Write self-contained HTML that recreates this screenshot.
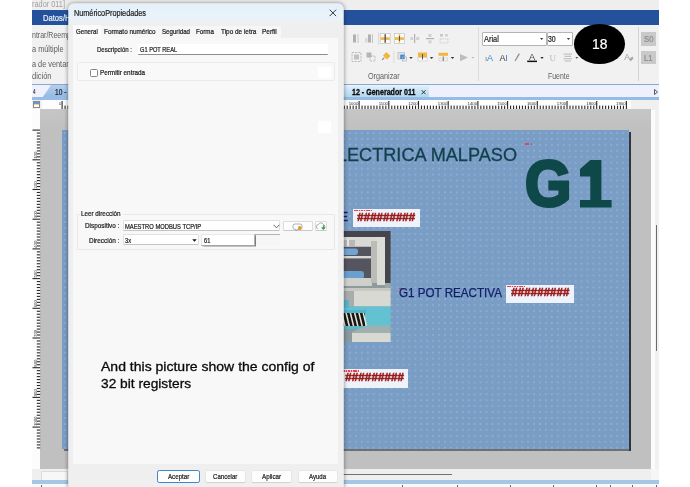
<!DOCTYPE html>
<html>
<head>
<meta charset="utf-8">
<title>NuméricoPropiedades</title>
<style>
html,body{margin:0;padding:0;}
body{width:690px;height:487px;background:#fff;position:relative;overflow:hidden;font-family:"Liberation Sans",sans-serif;}
.a{position:absolute;}
.t{position:absolute;white-space:nowrap;line-height:1;transform-origin:0 0;-webkit-text-stroke:0.22px currentColor;}
#shot{position:absolute;left:32px;top:0;width:626.5px;height:487px;background:#f0f0f0;overflow:hidden;}
#shot>*{filter:blur(0.3px);}
</style>
</head>
<body>
<div id="shot">
<div class="a" style="left:0.00px;top:0.00px;width:626.50px;height:10.00px;background:#eeeeee;"></div>
<div class="a" style="left:0.00px;top:10.00px;width:626.50px;height:14.50px;background:#24519b;"></div>
<div class="a" style="left:0.00px;top:24.50px;width:626.50px;height:60.00px;background:#f1f1f1;"></div>
<div class="a" style="left:446.00px;top:27.00px;width:1.00px;height:54.00px;background:#dcdcdc;"></div>
<div class="a" style="left:605.50px;top:27.00px;width:1.00px;height:54.00px;background:#d4d4d4;"></div>
<div class="a" style="left:0.00px;top:84.00px;width:626.50px;height:1.00px;background:#8aa6d2;"></div>
<div class="a" style="left:0.00px;top:85.00px;width:626.50px;height:13.50px;background:#eef1fb;"></div>
<svg class="a" style="left:0;top:85px" width="40" height="14" viewBox="0 0 40 14"><defs><linearGradient id="tg" x1="0" y1="0" x2="0" y2="1"><stop offset="0" stop-color="#b4cfec"/><stop offset="1" stop-color="#8fb7e0"/></linearGradient></defs><polygon points="19,0 40,0 40,14 9.5,14" fill="url(#tg)"/></svg>
<div class="a" style="left:311.00px;top:86.00px;width:85.70px;height:13.00px;background:linear-gradient(#dff0fa,#a9d2ee);"></div>
<div class="a" style="left:0.00px;top:97.40px;width:626.50px;height:2.50px;background:#96bbe4;"></div>
<div class="a" style="left:0.00px;top:100.00px;width:626.50px;height:9.00px;background:#f0f0f0;"></div>
<div class="a" style="left:10.00px;top:100.00px;width:588.50px;height:9.00px;background:#fdfdfd;"></div>
<div class="a" style="left:0.50px;top:101.00px;width:7.50px;height:7.00px;background:#fff;border:1px solid #8a8a8a;box-sizing:border-box;"></div>
<div class="a" style="left:1.50px;top:102.00px;width:5.50px;height:1.60px;background:#5b9be0;"></div>
<div class="a" style="left:1.50px;top:103.60px;width:5.50px;height:1.00px;background:#f3d37a;"></div>
<div class="a" style="left:0.00px;top:109.00px;width:619.00px;height:360.00px;background:linear-gradient(#c6c6c6,#c0c0c0 20px);"></div>
<div class="a" style="left:0.00px;top:109.00px;width:8.00px;height:372.00px;background:#fcfcfc;"></div>
<svg class="a" style="left:0;top:0" width="626" height="487" viewBox="32 0 626 487"><rect x="61.55" y="101" width="1.1" height="8" fill="#2a2a2a"/><text x="61.30" y="105" text-anchor="end" font-family="Liberation Sans" font-size="4.3" fill="#333">0</text><rect x="64.52" y="105.6" width="1.1" height="3.4" fill="#2a2a2a"/><rect x="67.49" y="105.6" width="1.1" height="3.4" fill="#2a2a2a"/><rect x="70.46" y="105.6" width="1.1" height="3.4" fill="#2a2a2a"/><rect x="73.43" y="105.6" width="1.1" height="3.4" fill="#2a2a2a"/><rect x="76.40" y="105.6" width="1.1" height="3.4" fill="#2a2a2a"/><rect x="79.37" y="105.6" width="1.1" height="3.4" fill="#2a2a2a"/><rect x="82.34" y="105.6" width="1.1" height="3.4" fill="#2a2a2a"/><rect x="85.31" y="105.6" width="1.1" height="3.4" fill="#2a2a2a"/><rect x="88.28" y="105.6" width="1.1" height="3.4" fill="#2a2a2a"/><rect x="91.25" y="101" width="1.1" height="8" fill="#2a2a2a"/><text x="91.00" y="105" text-anchor="end" font-family="Liberation Sans" font-size="4.3" fill="#333">100</text><rect x="94.22" y="105.6" width="1.1" height="3.4" fill="#2a2a2a"/><rect x="97.19" y="105.6" width="1.1" height="3.4" fill="#2a2a2a"/><rect x="100.16" y="105.6" width="1.1" height="3.4" fill="#2a2a2a"/><rect x="103.13" y="105.6" width="1.1" height="3.4" fill="#2a2a2a"/><rect x="106.10" y="105.6" width="1.1" height="3.4" fill="#2a2a2a"/><rect x="109.07" y="105.6" width="1.1" height="3.4" fill="#2a2a2a"/><rect x="112.04" y="105.6" width="1.1" height="3.4" fill="#2a2a2a"/><rect x="115.01" y="105.6" width="1.1" height="3.4" fill="#2a2a2a"/><rect x="117.98" y="105.6" width="1.1" height="3.4" fill="#2a2a2a"/><rect x="120.95" y="101" width="1.1" height="8" fill="#2a2a2a"/><text x="120.70" y="105" text-anchor="end" font-family="Liberation Sans" font-size="4.3" fill="#333">200</text><rect x="123.92" y="105.6" width="1.1" height="3.4" fill="#2a2a2a"/><rect x="126.89" y="105.6" width="1.1" height="3.4" fill="#2a2a2a"/><rect x="129.86" y="105.6" width="1.1" height="3.4" fill="#2a2a2a"/><rect x="132.83" y="105.6" width="1.1" height="3.4" fill="#2a2a2a"/><rect x="135.80" y="105.6" width="1.1" height="3.4" fill="#2a2a2a"/><rect x="138.77" y="105.6" width="1.1" height="3.4" fill="#2a2a2a"/><rect x="141.74" y="105.6" width="1.1" height="3.4" fill="#2a2a2a"/><rect x="144.71" y="105.6" width="1.1" height="3.4" fill="#2a2a2a"/><rect x="147.68" y="105.6" width="1.1" height="3.4" fill="#2a2a2a"/><rect x="150.65" y="101" width="1.1" height="8" fill="#2a2a2a"/><text x="150.40" y="105" text-anchor="end" font-family="Liberation Sans" font-size="4.3" fill="#333">300</text><rect x="153.62" y="105.6" width="1.1" height="3.4" fill="#2a2a2a"/><rect x="156.59" y="105.6" width="1.1" height="3.4" fill="#2a2a2a"/><rect x="159.56" y="105.6" width="1.1" height="3.4" fill="#2a2a2a"/><rect x="162.53" y="105.6" width="1.1" height="3.4" fill="#2a2a2a"/><rect x="165.50" y="105.6" width="1.1" height="3.4" fill="#2a2a2a"/><rect x="168.47" y="105.6" width="1.1" height="3.4" fill="#2a2a2a"/><rect x="171.44" y="105.6" width="1.1" height="3.4" fill="#2a2a2a"/><rect x="174.41" y="105.6" width="1.1" height="3.4" fill="#2a2a2a"/><rect x="177.38" y="105.6" width="1.1" height="3.4" fill="#2a2a2a"/><rect x="180.35" y="101" width="1.1" height="8" fill="#2a2a2a"/><text x="180.10" y="105" text-anchor="end" font-family="Liberation Sans" font-size="4.3" fill="#333">400</text><rect x="183.32" y="105.6" width="1.1" height="3.4" fill="#2a2a2a"/><rect x="186.29" y="105.6" width="1.1" height="3.4" fill="#2a2a2a"/><rect x="189.26" y="105.6" width="1.1" height="3.4" fill="#2a2a2a"/><rect x="192.23" y="105.6" width="1.1" height="3.4" fill="#2a2a2a"/><rect x="195.20" y="105.6" width="1.1" height="3.4" fill="#2a2a2a"/><rect x="198.17" y="105.6" width="1.1" height="3.4" fill="#2a2a2a"/><rect x="201.14" y="105.6" width="1.1" height="3.4" fill="#2a2a2a"/><rect x="204.11" y="105.6" width="1.1" height="3.4" fill="#2a2a2a"/><rect x="207.08" y="105.6" width="1.1" height="3.4" fill="#2a2a2a"/><rect x="210.05" y="101" width="1.1" height="8" fill="#2a2a2a"/><text x="209.80" y="105" text-anchor="end" font-family="Liberation Sans" font-size="4.3" fill="#333">500</text><rect x="213.02" y="105.6" width="1.1" height="3.4" fill="#2a2a2a"/><rect x="215.99" y="105.6" width="1.1" height="3.4" fill="#2a2a2a"/><rect x="218.96" y="105.6" width="1.1" height="3.4" fill="#2a2a2a"/><rect x="221.93" y="105.6" width="1.1" height="3.4" fill="#2a2a2a"/><rect x="224.90" y="105.6" width="1.1" height="3.4" fill="#2a2a2a"/><rect x="227.87" y="105.6" width="1.1" height="3.4" fill="#2a2a2a"/><rect x="230.84" y="105.6" width="1.1" height="3.4" fill="#2a2a2a"/><rect x="233.81" y="105.6" width="1.1" height="3.4" fill="#2a2a2a"/><rect x="236.78" y="105.6" width="1.1" height="3.4" fill="#2a2a2a"/><rect x="239.75" y="101" width="1.1" height="8" fill="#2a2a2a"/><text x="239.50" y="105" text-anchor="end" font-family="Liberation Sans" font-size="4.3" fill="#333">600</text><rect x="242.72" y="105.6" width="1.1" height="3.4" fill="#2a2a2a"/><rect x="245.69" y="105.6" width="1.1" height="3.4" fill="#2a2a2a"/><rect x="248.66" y="105.6" width="1.1" height="3.4" fill="#2a2a2a"/><rect x="251.63" y="105.6" width="1.1" height="3.4" fill="#2a2a2a"/><rect x="254.60" y="105.6" width="1.1" height="3.4" fill="#2a2a2a"/><rect x="257.57" y="105.6" width="1.1" height="3.4" fill="#2a2a2a"/><rect x="260.54" y="105.6" width="1.1" height="3.4" fill="#2a2a2a"/><rect x="263.51" y="105.6" width="1.1" height="3.4" fill="#2a2a2a"/><rect x="266.48" y="105.6" width="1.1" height="3.4" fill="#2a2a2a"/><rect x="269.45" y="101" width="1.1" height="8" fill="#2a2a2a"/><text x="269.20" y="105" text-anchor="end" font-family="Liberation Sans" font-size="4.3" fill="#333">700</text><rect x="272.42" y="105.6" width="1.1" height="3.4" fill="#2a2a2a"/><rect x="275.39" y="105.6" width="1.1" height="3.4" fill="#2a2a2a"/><rect x="278.36" y="105.6" width="1.1" height="3.4" fill="#2a2a2a"/><rect x="281.33" y="105.6" width="1.1" height="3.4" fill="#2a2a2a"/><rect x="284.30" y="105.6" width="1.1" height="3.4" fill="#2a2a2a"/><rect x="287.27" y="105.6" width="1.1" height="3.4" fill="#2a2a2a"/><rect x="290.24" y="105.6" width="1.1" height="3.4" fill="#2a2a2a"/><rect x="293.21" y="105.6" width="1.1" height="3.4" fill="#2a2a2a"/><rect x="296.18" y="105.6" width="1.1" height="3.4" fill="#2a2a2a"/><rect x="299.15" y="101" width="1.1" height="8" fill="#2a2a2a"/><text x="298.90" y="105" text-anchor="end" font-family="Liberation Sans" font-size="4.3" fill="#333">800</text><rect x="302.12" y="105.6" width="1.1" height="3.4" fill="#2a2a2a"/><rect x="305.09" y="105.6" width="1.1" height="3.4" fill="#2a2a2a"/><rect x="308.06" y="105.6" width="1.1" height="3.4" fill="#2a2a2a"/><rect x="311.03" y="105.6" width="1.1" height="3.4" fill="#2a2a2a"/><rect x="314.00" y="105.6" width="1.1" height="3.4" fill="#2a2a2a"/><rect x="316.97" y="105.6" width="1.1" height="3.4" fill="#2a2a2a"/><rect x="319.94" y="105.6" width="1.1" height="3.4" fill="#2a2a2a"/><rect x="322.91" y="105.6" width="1.1" height="3.4" fill="#2a2a2a"/><rect x="325.88" y="105.6" width="1.1" height="3.4" fill="#2a2a2a"/><rect x="328.85" y="101" width="1.1" height="8" fill="#2a2a2a"/><text x="328.60" y="105" text-anchor="end" font-family="Liberation Sans" font-size="4.3" fill="#333">900</text><rect x="331.82" y="105.6" width="1.1" height="3.4" fill="#2a2a2a"/><rect x="334.79" y="105.6" width="1.1" height="3.4" fill="#2a2a2a"/><rect x="337.76" y="105.6" width="1.1" height="3.4" fill="#2a2a2a"/><rect x="340.73" y="105.6" width="1.1" height="3.4" fill="#2a2a2a"/><rect x="343.70" y="105.6" width="1.1" height="3.4" fill="#2a2a2a"/><rect x="346.67" y="105.6" width="1.1" height="3.4" fill="#2a2a2a"/><rect x="349.64" y="105.6" width="1.1" height="3.4" fill="#2a2a2a"/><rect x="352.61" y="105.6" width="1.1" height="3.4" fill="#2a2a2a"/><rect x="355.58" y="105.6" width="1.1" height="3.4" fill="#2a2a2a"/><rect x="358.55" y="101" width="1.1" height="8" fill="#2a2a2a"/><text x="358.30" y="105" text-anchor="end" font-family="Liberation Sans" font-size="4.3" fill="#333">1000</text><rect x="361.52" y="105.6" width="1.1" height="3.4" fill="#2a2a2a"/><rect x="364.49" y="105.6" width="1.1" height="3.4" fill="#2a2a2a"/><rect x="367.46" y="105.6" width="1.1" height="3.4" fill="#2a2a2a"/><rect x="370.43" y="105.6" width="1.1" height="3.4" fill="#2a2a2a"/><rect x="373.40" y="105.6" width="1.1" height="3.4" fill="#2a2a2a"/><rect x="376.37" y="105.6" width="1.1" height="3.4" fill="#2a2a2a"/><rect x="379.34" y="105.6" width="1.1" height="3.4" fill="#2a2a2a"/><rect x="382.31" y="105.6" width="1.1" height="3.4" fill="#2a2a2a"/><rect x="385.28" y="105.6" width="1.1" height="3.4" fill="#2a2a2a"/><rect x="388.25" y="101" width="1.1" height="8" fill="#2a2a2a"/><text x="388.00" y="105" text-anchor="end" font-family="Liberation Sans" font-size="4.3" fill="#333">1100</text><rect x="391.22" y="105.6" width="1.1" height="3.4" fill="#2a2a2a"/><rect x="394.19" y="105.6" width="1.1" height="3.4" fill="#2a2a2a"/><rect x="397.16" y="105.6" width="1.1" height="3.4" fill="#2a2a2a"/><rect x="400.13" y="105.6" width="1.1" height="3.4" fill="#2a2a2a"/><rect x="403.10" y="105.6" width="1.1" height="3.4" fill="#2a2a2a"/><rect x="406.07" y="105.6" width="1.1" height="3.4" fill="#2a2a2a"/><rect x="409.04" y="105.6" width="1.1" height="3.4" fill="#2a2a2a"/><rect x="412.01" y="105.6" width="1.1" height="3.4" fill="#2a2a2a"/><rect x="414.98" y="105.6" width="1.1" height="3.4" fill="#2a2a2a"/><rect x="417.95" y="101" width="1.1" height="8" fill="#2a2a2a"/><text x="417.70" y="105" text-anchor="end" font-family="Liberation Sans" font-size="4.3" fill="#333">1200</text><rect x="420.92" y="105.6" width="1.1" height="3.4" fill="#2a2a2a"/><rect x="423.89" y="105.6" width="1.1" height="3.4" fill="#2a2a2a"/><rect x="426.86" y="105.6" width="1.1" height="3.4" fill="#2a2a2a"/><rect x="429.83" y="105.6" width="1.1" height="3.4" fill="#2a2a2a"/><rect x="432.80" y="105.6" width="1.1" height="3.4" fill="#2a2a2a"/><rect x="435.77" y="105.6" width="1.1" height="3.4" fill="#2a2a2a"/><rect x="438.74" y="105.6" width="1.1" height="3.4" fill="#2a2a2a"/><rect x="441.71" y="105.6" width="1.1" height="3.4" fill="#2a2a2a"/><rect x="444.68" y="105.6" width="1.1" height="3.4" fill="#2a2a2a"/><rect x="447.65" y="101" width="1.1" height="8" fill="#2a2a2a"/><text x="447.40" y="105" text-anchor="end" font-family="Liberation Sans" font-size="4.3" fill="#333">1300</text><rect x="450.62" y="105.6" width="1.1" height="3.4" fill="#2a2a2a"/><rect x="453.59" y="105.6" width="1.1" height="3.4" fill="#2a2a2a"/><rect x="456.56" y="105.6" width="1.1" height="3.4" fill="#2a2a2a"/><rect x="459.53" y="105.6" width="1.1" height="3.4" fill="#2a2a2a"/><rect x="462.50" y="105.6" width="1.1" height="3.4" fill="#2a2a2a"/><rect x="465.47" y="105.6" width="1.1" height="3.4" fill="#2a2a2a"/><rect x="468.44" y="105.6" width="1.1" height="3.4" fill="#2a2a2a"/><rect x="471.41" y="105.6" width="1.1" height="3.4" fill="#2a2a2a"/><rect x="474.38" y="105.6" width="1.1" height="3.4" fill="#2a2a2a"/><rect x="477.35" y="101" width="1.1" height="8" fill="#2a2a2a"/><text x="477.10" y="105" text-anchor="end" font-family="Liberation Sans" font-size="4.3" fill="#333">1400</text><rect x="480.32" y="105.6" width="1.1" height="3.4" fill="#2a2a2a"/><rect x="483.29" y="105.6" width="1.1" height="3.4" fill="#2a2a2a"/><rect x="486.26" y="105.6" width="1.1" height="3.4" fill="#2a2a2a"/><rect x="489.23" y="105.6" width="1.1" height="3.4" fill="#2a2a2a"/><rect x="492.20" y="105.6" width="1.1" height="3.4" fill="#2a2a2a"/><rect x="495.17" y="105.6" width="1.1" height="3.4" fill="#2a2a2a"/><rect x="498.14" y="105.6" width="1.1" height="3.4" fill="#2a2a2a"/><rect x="501.11" y="105.6" width="1.1" height="3.4" fill="#2a2a2a"/><rect x="504.08" y="105.6" width="1.1" height="3.4" fill="#2a2a2a"/><rect x="507.05" y="101" width="1.1" height="8" fill="#2a2a2a"/><text x="506.80" y="105" text-anchor="end" font-family="Liberation Sans" font-size="4.3" fill="#333">1500</text><rect x="510.02" y="105.6" width="1.1" height="3.4" fill="#2a2a2a"/><rect x="512.99" y="105.6" width="1.1" height="3.4" fill="#2a2a2a"/><rect x="515.96" y="105.6" width="1.1" height="3.4" fill="#2a2a2a"/><rect x="518.93" y="105.6" width="1.1" height="3.4" fill="#2a2a2a"/><rect x="521.90" y="105.6" width="1.1" height="3.4" fill="#2a2a2a"/><rect x="524.87" y="105.6" width="1.1" height="3.4" fill="#2a2a2a"/><rect x="527.84" y="105.6" width="1.1" height="3.4" fill="#2a2a2a"/><rect x="530.81" y="105.6" width="1.1" height="3.4" fill="#2a2a2a"/><rect x="533.78" y="105.6" width="1.1" height="3.4" fill="#2a2a2a"/><rect x="536.75" y="101" width="1.1" height="8" fill="#2a2a2a"/><text x="536.50" y="105" text-anchor="end" font-family="Liberation Sans" font-size="4.3" fill="#333">1600</text><rect x="539.72" y="105.6" width="1.1" height="3.4" fill="#2a2a2a"/><rect x="542.69" y="105.6" width="1.1" height="3.4" fill="#2a2a2a"/><rect x="545.66" y="105.6" width="1.1" height="3.4" fill="#2a2a2a"/><rect x="548.63" y="105.6" width="1.1" height="3.4" fill="#2a2a2a"/><rect x="551.60" y="105.6" width="1.1" height="3.4" fill="#2a2a2a"/><rect x="554.57" y="105.6" width="1.1" height="3.4" fill="#2a2a2a"/><rect x="557.54" y="105.6" width="1.1" height="3.4" fill="#2a2a2a"/><rect x="560.51" y="105.6" width="1.1" height="3.4" fill="#2a2a2a"/><rect x="563.48" y="105.6" width="1.1" height="3.4" fill="#2a2a2a"/><rect x="566.45" y="101" width="1.1" height="8" fill="#2a2a2a"/><text x="566.20" y="105" text-anchor="end" font-family="Liberation Sans" font-size="4.3" fill="#333">1700</text><rect x="569.42" y="105.6" width="1.1" height="3.4" fill="#2a2a2a"/><rect x="572.39" y="105.6" width="1.1" height="3.4" fill="#2a2a2a"/><rect x="575.36" y="105.6" width="1.1" height="3.4" fill="#2a2a2a"/><rect x="578.33" y="105.6" width="1.1" height="3.4" fill="#2a2a2a"/><rect x="581.30" y="105.6" width="1.1" height="3.4" fill="#2a2a2a"/><rect x="584.27" y="105.6" width="1.1" height="3.4" fill="#2a2a2a"/><rect x="587.24" y="105.6" width="1.1" height="3.4" fill="#2a2a2a"/><rect x="590.21" y="105.6" width="1.1" height="3.4" fill="#2a2a2a"/><rect x="593.18" y="105.6" width="1.1" height="3.4" fill="#2a2a2a"/><rect x="596.15" y="101" width="1.1" height="8" fill="#2a2a2a"/><text x="595.90" y="105" text-anchor="end" font-family="Liberation Sans" font-size="4.3" fill="#333">1800</text><rect x="599.12" y="105.6" width="1.1" height="3.4" fill="#2a2a2a"/><rect x="602.09" y="105.6" width="1.1" height="3.4" fill="#2a2a2a"/><rect x="605.06" y="105.6" width="1.1" height="3.4" fill="#2a2a2a"/><rect x="608.03" y="105.6" width="1.1" height="3.4" fill="#2a2a2a"/><rect x="611.00" y="105.6" width="1.1" height="3.4" fill="#2a2a2a"/><rect x="613.97" y="105.6" width="1.1" height="3.4" fill="#2a2a2a"/><rect x="616.94" y="105.6" width="1.1" height="3.4" fill="#2a2a2a"/><rect x="619.91" y="105.6" width="1.1" height="3.4" fill="#2a2a2a"/><rect x="622.88" y="105.6" width="1.1" height="3.4" fill="#2a2a2a"/><rect x="625.85" y="101" width="1.1" height="8" fill="#2a2a2a"/><text x="625.60" y="105" text-anchor="end" font-family="Liberation Sans" font-size="4.3" fill="#333">1900</text><rect x="32.5" y="129.55" width="7.5" height="1.1" fill="#2a2a2a"/><rect x="36.8" y="132.52" width="3.4" height="1.1" fill="#2a2a2a"/><rect x="36.8" y="135.49" width="3.4" height="1.1" fill="#2a2a2a"/><rect x="36.8" y="138.46" width="3.4" height="1.1" fill="#2a2a2a"/><rect x="36.8" y="141.43" width="3.4" height="1.1" fill="#2a2a2a"/><rect x="36.8" y="144.40" width="3.4" height="1.1" fill="#2a2a2a"/><rect x="36.8" y="147.37" width="3.4" height="1.1" fill="#2a2a2a"/><rect x="36.8" y="150.34" width="3.4" height="1.1" fill="#2a2a2a"/><rect x="36.8" y="153.31" width="3.4" height="1.1" fill="#2a2a2a"/><rect x="36.8" y="156.28" width="3.4" height="1.1" fill="#2a2a2a"/><rect x="32.5" y="159.25" width="7.5" height="1.1" fill="#2a2a2a"/><text transform="translate(36.6 158.80) rotate(-90)" text-anchor="start" font-family="Liberation Sans" font-size="4.3" fill="#333">100</text><rect x="36.8" y="162.22" width="3.4" height="1.1" fill="#2a2a2a"/><rect x="36.8" y="165.19" width="3.4" height="1.1" fill="#2a2a2a"/><rect x="36.8" y="168.16" width="3.4" height="1.1" fill="#2a2a2a"/><rect x="36.8" y="171.13" width="3.4" height="1.1" fill="#2a2a2a"/><rect x="36.8" y="174.10" width="3.4" height="1.1" fill="#2a2a2a"/><rect x="36.8" y="177.07" width="3.4" height="1.1" fill="#2a2a2a"/><rect x="36.8" y="180.04" width="3.4" height="1.1" fill="#2a2a2a"/><rect x="36.8" y="183.01" width="3.4" height="1.1" fill="#2a2a2a"/><rect x="36.8" y="185.98" width="3.4" height="1.1" fill="#2a2a2a"/><rect x="32.5" y="188.95" width="7.5" height="1.1" fill="#2a2a2a"/><text transform="translate(36.6 188.50) rotate(-90)" text-anchor="start" font-family="Liberation Sans" font-size="4.3" fill="#333">200</text><rect x="36.8" y="191.92" width="3.4" height="1.1" fill="#2a2a2a"/><rect x="36.8" y="194.89" width="3.4" height="1.1" fill="#2a2a2a"/><rect x="36.8" y="197.86" width="3.4" height="1.1" fill="#2a2a2a"/><rect x="36.8" y="200.83" width="3.4" height="1.1" fill="#2a2a2a"/><rect x="36.8" y="203.80" width="3.4" height="1.1" fill="#2a2a2a"/><rect x="36.8" y="206.77" width="3.4" height="1.1" fill="#2a2a2a"/><rect x="36.8" y="209.74" width="3.4" height="1.1" fill="#2a2a2a"/><rect x="36.8" y="212.71" width="3.4" height="1.1" fill="#2a2a2a"/><rect x="36.8" y="215.68" width="3.4" height="1.1" fill="#2a2a2a"/><rect x="32.5" y="218.65" width="7.5" height="1.1" fill="#2a2a2a"/><text transform="translate(36.6 218.20) rotate(-90)" text-anchor="start" font-family="Liberation Sans" font-size="4.3" fill="#333">300</text><rect x="36.8" y="221.62" width="3.4" height="1.1" fill="#2a2a2a"/><rect x="36.8" y="224.59" width="3.4" height="1.1" fill="#2a2a2a"/><rect x="36.8" y="227.56" width="3.4" height="1.1" fill="#2a2a2a"/><rect x="36.8" y="230.53" width="3.4" height="1.1" fill="#2a2a2a"/><rect x="36.8" y="233.50" width="3.4" height="1.1" fill="#2a2a2a"/><rect x="36.8" y="236.47" width="3.4" height="1.1" fill="#2a2a2a"/><rect x="36.8" y="239.44" width="3.4" height="1.1" fill="#2a2a2a"/><rect x="36.8" y="242.41" width="3.4" height="1.1" fill="#2a2a2a"/><rect x="36.8" y="245.38" width="3.4" height="1.1" fill="#2a2a2a"/><rect x="32.5" y="248.35" width="7.5" height="1.1" fill="#2a2a2a"/><text transform="translate(36.6 247.90) rotate(-90)" text-anchor="start" font-family="Liberation Sans" font-size="4.3" fill="#333">400</text><rect x="36.8" y="251.32" width="3.4" height="1.1" fill="#2a2a2a"/><rect x="36.8" y="254.29" width="3.4" height="1.1" fill="#2a2a2a"/><rect x="36.8" y="257.26" width="3.4" height="1.1" fill="#2a2a2a"/><rect x="36.8" y="260.23" width="3.4" height="1.1" fill="#2a2a2a"/><rect x="36.8" y="263.20" width="3.4" height="1.1" fill="#2a2a2a"/><rect x="36.8" y="266.17" width="3.4" height="1.1" fill="#2a2a2a"/><rect x="36.8" y="269.14" width="3.4" height="1.1" fill="#2a2a2a"/><rect x="36.8" y="272.11" width="3.4" height="1.1" fill="#2a2a2a"/><rect x="36.8" y="275.08" width="3.4" height="1.1" fill="#2a2a2a"/><rect x="32.5" y="278.05" width="7.5" height="1.1" fill="#2a2a2a"/><text transform="translate(36.6 277.60) rotate(-90)" text-anchor="start" font-family="Liberation Sans" font-size="4.3" fill="#333">500</text><rect x="36.8" y="281.02" width="3.4" height="1.1" fill="#2a2a2a"/><rect x="36.8" y="283.99" width="3.4" height="1.1" fill="#2a2a2a"/><rect x="36.8" y="286.96" width="3.4" height="1.1" fill="#2a2a2a"/><rect x="36.8" y="289.93" width="3.4" height="1.1" fill="#2a2a2a"/><rect x="36.8" y="292.90" width="3.4" height="1.1" fill="#2a2a2a"/><rect x="36.8" y="295.87" width="3.4" height="1.1" fill="#2a2a2a"/><rect x="36.8" y="298.84" width="3.4" height="1.1" fill="#2a2a2a"/><rect x="36.8" y="301.81" width="3.4" height="1.1" fill="#2a2a2a"/><rect x="36.8" y="304.78" width="3.4" height="1.1" fill="#2a2a2a"/><rect x="32.5" y="307.75" width="7.5" height="1.1" fill="#2a2a2a"/><text transform="translate(36.6 307.30) rotate(-90)" text-anchor="start" font-family="Liberation Sans" font-size="4.3" fill="#333">600</text><rect x="36.8" y="310.72" width="3.4" height="1.1" fill="#2a2a2a"/><rect x="36.8" y="313.69" width="3.4" height="1.1" fill="#2a2a2a"/><rect x="36.8" y="316.66" width="3.4" height="1.1" fill="#2a2a2a"/><rect x="36.8" y="319.63" width="3.4" height="1.1" fill="#2a2a2a"/><rect x="36.8" y="322.60" width="3.4" height="1.1" fill="#2a2a2a"/><rect x="36.8" y="325.57" width="3.4" height="1.1" fill="#2a2a2a"/><rect x="36.8" y="328.54" width="3.4" height="1.1" fill="#2a2a2a"/><rect x="36.8" y="331.51" width="3.4" height="1.1" fill="#2a2a2a"/><rect x="36.8" y="334.48" width="3.4" height="1.1" fill="#2a2a2a"/><rect x="32.5" y="337.45" width="7.5" height="1.1" fill="#2a2a2a"/><text transform="translate(36.6 337.00) rotate(-90)" text-anchor="start" font-family="Liberation Sans" font-size="4.3" fill="#333">700</text><rect x="36.8" y="340.42" width="3.4" height="1.1" fill="#2a2a2a"/><rect x="36.8" y="343.39" width="3.4" height="1.1" fill="#2a2a2a"/><rect x="36.8" y="346.36" width="3.4" height="1.1" fill="#2a2a2a"/><rect x="36.8" y="349.33" width="3.4" height="1.1" fill="#2a2a2a"/><rect x="36.8" y="352.30" width="3.4" height="1.1" fill="#2a2a2a"/><rect x="36.8" y="355.27" width="3.4" height="1.1" fill="#2a2a2a"/><rect x="36.8" y="358.24" width="3.4" height="1.1" fill="#2a2a2a"/><rect x="36.8" y="361.21" width="3.4" height="1.1" fill="#2a2a2a"/><rect x="36.8" y="364.18" width="3.4" height="1.1" fill="#2a2a2a"/><rect x="32.5" y="367.15" width="7.5" height="1.1" fill="#2a2a2a"/><text transform="translate(36.6 366.70) rotate(-90)" text-anchor="start" font-family="Liberation Sans" font-size="4.3" fill="#333">800</text><rect x="36.8" y="370.12" width="3.4" height="1.1" fill="#2a2a2a"/><rect x="36.8" y="373.09" width="3.4" height="1.1" fill="#2a2a2a"/><rect x="36.8" y="376.06" width="3.4" height="1.1" fill="#2a2a2a"/><rect x="36.8" y="379.03" width="3.4" height="1.1" fill="#2a2a2a"/><rect x="36.8" y="382.00" width="3.4" height="1.1" fill="#2a2a2a"/><rect x="36.8" y="384.97" width="3.4" height="1.1" fill="#2a2a2a"/><rect x="36.8" y="387.94" width="3.4" height="1.1" fill="#2a2a2a"/><rect x="36.8" y="390.91" width="3.4" height="1.1" fill="#2a2a2a"/><rect x="36.8" y="393.88" width="3.4" height="1.1" fill="#2a2a2a"/><rect x="32.5" y="396.85" width="7.5" height="1.1" fill="#2a2a2a"/><text transform="translate(36.6 396.40) rotate(-90)" text-anchor="start" font-family="Liberation Sans" font-size="4.3" fill="#333">900</text><rect x="36.8" y="399.82" width="3.4" height="1.1" fill="#2a2a2a"/><rect x="36.8" y="402.79" width="3.4" height="1.1" fill="#2a2a2a"/><rect x="36.8" y="405.76" width="3.4" height="1.1" fill="#2a2a2a"/><rect x="36.8" y="408.73" width="3.4" height="1.1" fill="#2a2a2a"/><rect x="36.8" y="411.70" width="3.4" height="1.1" fill="#2a2a2a"/><rect x="36.8" y="414.67" width="3.4" height="1.1" fill="#2a2a2a"/><rect x="36.8" y="417.64" width="3.4" height="1.1" fill="#2a2a2a"/><rect x="36.8" y="420.61" width="3.4" height="1.1" fill="#2a2a2a"/><rect x="36.8" y="423.58" width="3.4" height="1.1" fill="#2a2a2a"/><rect x="32.5" y="426.55" width="7.5" height="1.1" fill="#2a2a2a"/><text transform="translate(36.6 426.10) rotate(-90)" text-anchor="start" font-family="Liberation Sans" font-size="4.3" fill="#333">1000</text><rect x="36.8" y="429.52" width="3.4" height="1.1" fill="#2a2a2a"/><rect x="36.8" y="432.49" width="3.4" height="1.1" fill="#2a2a2a"/><rect x="36.8" y="435.46" width="3.4" height="1.1" fill="#2a2a2a"/><rect x="36.8" y="438.43" width="3.4" height="1.1" fill="#2a2a2a"/><rect x="36.8" y="441.40" width="3.4" height="1.1" fill="#2a2a2a"/><rect x="36.8" y="444.37" width="3.4" height="1.1" fill="#2a2a2a"/><rect x="36.8" y="447.34" width="3.4" height="1.1" fill="#2a2a2a"/></svg>
<div class="a" style="left:32.00px;top:132.00px;width:567.00px;height:319.00px;background:#6e7074;"></div>
<div class="a" style="left:597.00px;top:132.00px;width:2.00px;height:319.00px;background:#30343e;"></div>
<div class="a" style="left:30.00px;top:130.00px;width:567.30px;height:319.00px;background:#7a9dc5;background-image:radial-gradient(circle at 1px 1px,rgba(190,212,236,.26) 0.7px,rgba(190,212,236,0) 1.4px);background-size:5.94px 5.94px;background-position:2px 2px;"></div>
<div class="a" style="left:619.00px;top:109.00px;width:7.50px;height:360.00px;background:#f1f1f1;"></div>
<div class="a" style="left:619.00px;top:110.00px;width:3.60px;height:359.00px;background:#fbfbfb;"></div>
<div class="a" style="left:623.60px;top:225.00px;width:1.40px;height:126.00px;background:#6a6a6a;"></div>
<div class="a" style="left:0.00px;top:469.00px;width:626.50px;height:11.50px;background:#efefef;"></div>
<div class="a" style="left:9.00px;top:470.50px;width:27.00px;height:10.00px;background:#f7f7f7;border:1px solid #dcdcdc;box-sizing:border-box;"></div>
<div class="a" style="left:311.00px;top:473.60px;width:109.00px;height:1.30px;background:#707070;"></div>
<div class="a" style="left:619.00px;top:469.00px;width:7.50px;height:11.50px;background:#f6f6f6;"></div>
<div class="a" style="left:0.00px;top:480.20px;width:626.50px;height:4.00px;background:#a6c6e6;"></div>
<div class="a" style="left:0.00px;top:484.20px;width:626.50px;height:3.00px;background:#f7f9fc;"></div>
<div class="a" style="left:8.50px;top:484.60px;width:1.00px;height:3.00px;background:#666;"></div>
<div class="a" style="left:369.50px;top:484.60px;width:1.00px;height:3.00px;background:#666;"></div>
<div class="a" style="left:424.50px;top:484.60px;width:1.00px;height:3.00px;background:#666;"></div>
<div class="a" style="left:478.00px;top:484.60px;width:1.00px;height:3.00px;background:#666;"></div>
<div class="a" style="left:520.50px;top:484.60px;width:1.00px;height:3.00px;background:#666;"></div>
<div class="a" style="left:563.50px;top:484.60px;width:1.00px;height:3.00px;background:#666;"></div>
<div class="a" style="left:578.00px;top:484.60px;width:1.00px;height:3.00px;background:#666;"></div>
<div class="a" style="left:599.60px;top:484.60px;width:1.00px;height:3.00px;background:#666;"></div>
<div class="a" style="left:623.50px;top:484.60px;width:1.00px;height:3.00px;background:#666;"></div>
<div class="a" style="left:450.00px;top:32.00px;width:64.50px;height:13.50px;background:#fff;border:1px solid #b5b5b5;box-sizing:border-box;border-radius:1px;"></div>
<div class="a" style="left:514.50px;top:32.00px;width:26.00px;height:13.50px;background:#fff;border:1px solid #b5b5b5;box-sizing:border-box;border-radius:1px;"></div>
<div class="a" style="left:609.00px;top:32.00px;width:14.50px;height:13.50px;background:#c9c9c9;"></div>
<div class="a" style="left:609.00px;top:50.60px;width:14.50px;height:13.70px;background:#c9c9c9;"></div>
<svg class="a" style="left:0;top:0" width="626" height="100" viewBox="32 0 626 100"><rect x="353" y="34.5" width="3" height="8" fill="#b0b0b0"/><rect x="357.5" y="34" width="1" height="9" fill="#c4c4c4"/><rect x="368" y="34.5" width="3" height="8" fill="#b0b0b0"/><rect x="365" y="38" width="2.5" height="4.5" fill="#d8d8d8"/><rect x="372" y="34" width="1" height="9" fill="#c4c4c4"/><rect x="378" y="32" width="0.8" height="13" fill="#d8d8d8"/><rect x="380.2" y="33.5" width="10" height="10" fill="#fafafa" stroke="#c4c4c4" stroke-width="0.7"/><rect x="380.7" y="37.3" width="9" height="2.6" fill="#f3b63c"/><rect x="384.5" y="34.2" width="1.4" height="8.6" fill="#555"/><rect x="394.4" y="33.5" width="10" height="10" fill="#fafafa" stroke="#c4c4c4" stroke-width="0.7"/><rect x="394.9" y="37.3" width="9" height="2.6" fill="#f3b63c"/><rect x="398.7" y="34.2" width="1.4" height="8.6" fill="#f3b63c"/><rect x="399" y="36" width="1" height="5" fill="#555"/><rect x="414" y="34" width="1.2" height="9" fill="#b0b0b0"/><rect x="410.5" y="37" width="2.5" height="3" fill="#d0d0d0"/><rect x="416.2" y="37" width="3" height="3" fill="#d0d0d0"/><rect x="426" y="38" width="8" height="1.2" fill="#b0b0b0"/><rect x="428.5" y="34" width="3" height="3" fill="#d0d0d0"/><rect x="428.5" y="40.3" width="3" height="3" fill="#d0d0d0"/><rect x="440" y="34" width="3" height="2.5" fill="#c8c8c8"/><rect x="445" y="34" width="3" height="2.5" fill="#d4d4d4"/><rect x="440" y="39" width="8" height="4" fill="none" stroke="#c4c4c4" stroke-width="0.8" stroke-dasharray="1.5 1"/><rect x="352" y="52.5" width="9" height="9" fill="none" stroke="#b0b0b0" stroke-width="0.9" stroke-dasharray="2 1.2"/><rect x="354" y="54.5" width="5" height="5" fill="#c2c2c2"/><rect x="366.5" y="52.5" width="5" height="5" fill="#b5b5b5"/><rect x="370" y="56" width="5" height="5" fill="none" stroke="#b0b0b0" stroke-width="0.9" stroke-dasharray="1.6 1"/><polygon points="386.5,52 390.5,56 387,59.5 383,55.5" fill="#f3b63c"/><rect x="381.6" y="58.2" width="3.2" height="1.1" fill="#888" transform="rotate(-45 383.2 58.7)"/><rect x="393.5" y="51" width="0.8" height="12" fill="#d8d8d8"/><rect x="398" y="52.5" width="6.5" height="6.5" fill="#e4e4e4" stroke="#b8b8b8" stroke-width="0.7"/><rect x="400.2" y="54.6" width="4.4" height="4.4" fill="#3f8ae0"/><rect x="402.6" y="57" width="4" height="4" fill="none" stroke="#b0b0b0" stroke-width="0.7"/><polygon points="409.3,57 412.7,57 411,59" fill="#333"/><rect x="418" y="52.5" width="9" height="5" fill="#f3b63c"/><rect x="418" y="57.5" width="9" height="3.5" fill="#fafafa" stroke="#c8c8c8" stroke-width="0.6"/><rect x="422" y="54" width="1" height="5.5" fill="#555"/><polygon points="429.9,57 433.3,57 431.6,59" fill="#333"/><rect x="438.5" y="52.8" width="9.5" height="3" fill="#f3b63c"/><rect x="442.7" y="56.5" width="1.1" height="4.5" fill="#666"/><rect x="439" y="58" width="8.5" height="3" fill="none" stroke="#ccc" stroke-width="0.6"/><polygon points="450.8,57 454.2,57 452.5,59" fill="#333"/><polygon points="460,54 468,57.6 460,61.2" fill="#bdbdbd"/><polygon points="471.6,57 474.4,57 473,58.8" fill="#bbb"/><polygon points="540,38 543.4,38 541.7,40" fill="#444"/><polygon points="566.8,38 570.2,38 568.5,40" fill="#444"/><text x="485.2" y="61" font-family="Liberation Sans" font-size="6" fill="#555">I</text><text x="487" y="61" font-family="Liberation Sans" font-size="9" fill="#3f8ad8">A</text><text x="499.5" y="61" font-family="Liberation Sans" font-size="9" fill="#444">A</text><rect x="506" y="55" width="1" height="6" fill="#5a8ed0"/><line x1="519.3" y1="53.6" x2="515" y2="61" stroke="#8a8a8a" stroke-width="1.2"/><text x="529" y="59.6" font-family="Liberation Sans" font-size="9.2" fill="#444">A</text><rect x="527.2" y="60.6" width="9.8" height="1.5" fill="#111"/><polygon points="540.3,57 543.7,57 542,59" fill="#333"/><text x="549.6" y="60.5" font-family="Liberation Serif" font-size="9" fill="#bcbcbc">U</text><rect x="563.5" y="53.5" width="8.5" height="1.2" fill="#c2c2c2"/><rect x="564.5" y="55.8" width="6.5" height="1.2" fill="#c2c2c2"/><rect x="563.5" y="58.1" width="8.5" height="1.2" fill="#c2c2c2"/><rect x="564.5" y="60.4" width="6.5" height="1.2" fill="#c2c2c2"/><polygon points="575.3,57 578.3,57 576.8,58.8" fill="#3a5a8a"/><text x="624.2" y="60" font-family="Liberation Sans" font-size="8.5" fill="#9a9a9a">A</text><polygon points="629,59 632.5,56.5 633.5,58.5 630.5,61.5" fill="#a8a8a8"/><path d="M421.6 90.2 L425.6 94.2 M425.6 90.2 L421.6 94.2" stroke="#222" stroke-width="0.9" fill="none"/><polygon points="654.5,89.5 657.5,92 654.5,94.5" fill="none" stroke="#333" stroke-width="0.8"/></svg>
<div class="a" style="left:542.3px;top:24px;width:50.5px;height:39.5px;border-radius:50%;background:#000;"></div>
<div class="a" style="left:321.00px;top:209.00px;width:67.40px;height:18.00px;background:#eef2fa;"></div><div class="a" style="left:322.00px;top:209.60px;width:18.00px;height:1.80px;background:repeating-linear-gradient(90deg,#e8414a 0 1.6px,rgba(232,65,74,.25) 1.6px 2.4px);"></div><div class="a" style="left:474.20px;top:284.90px;width:67.80px;height:17.90px;background:#eef2fa;"></div><div class="a" style="left:475.20px;top:285.50px;width:18.00px;height:1.80px;background:repeating-linear-gradient(90deg,#e8414a 0 1.6px,rgba(232,65,74,.25) 1.6px 2.4px);"></div><div class="a" style="left:308.00px;top:369.20px;width:68.40px;height:18.60px;background:#eef2fa;"></div><div class="a" style="left:309.00px;top:369.80px;width:18.00px;height:1.80px;background:repeating-linear-gradient(90deg,#e8414a 0 1.6px,rgba(232,65,74,.25) 1.6px 2.4px);"></div><div class="a" style="left:493.40px;top:143.00px;width:4.00px;height:1.80px;background:#d8486a;"></div><div class="a" style="left:498.50px;top:143.20px;width:1.60px;height:1.40px;background:#d8486a;"></div><div class="a" style="left:366.60px;top:287.60px;width:3.00px;height:1.30px;background:#d03a4a;"></div><svg class="a" style="left:0;top:0" width="626" height="487" viewBox="32 0 626 487"><polygon points="590.3,160 601.4,160 601.4,200 611.6,200 611.6,207.6 580,207.6 580,200 590.3,200 590.3,176.5 580,176.5 580,169 C586,169 589.6,166 590.3,160" fill="#0e4848"/></svg><svg class="a" style="left:308.0px;top:231px" width="50.6" height="111" viewBox="340 231 50.6 111"><rect x="340" y="231" width="50.6" height="111" fill="#8f9a9c"/><rect x="340" y="231" width="50.6" height="52" fill="#45454d"/><rect x="340" y="237" width="44.5" height="46" fill="#d4d4cf"/><rect x="340" y="246.5" width="32" height="36" fill="#55555f"/><rect x="340" y="237" width="38" height="9.5" fill="#d9d9d5"/><rect x="343" y="240" width="12" height="6" fill="#b8b8b8"/><rect x="347" y="239" width="2" height="7" fill="#e8e8e8"/><rect x="340" y="248.5" width="18" height="6.5" rx="2.5" fill="#6fa4d4"/><rect x="340" y="256" width="38" height="2.4" fill="#d8d8d4"/><rect x="340" y="271" width="24" height="8" rx="3" fill="#6a9fd0"/><rect x="340" y="278" width="32" height="8" fill="#cfcfcb"/><rect x="371" y="241" width="6" height="42" fill="#bcbcb6"/><rect x="377" y="237" width="8" height="48" fill="#dcdcd6"/><rect x="385" y="283" width="5.6" height="8" fill="#9aa6a8"/><rect x="340" y="288" width="50.6" height="4" fill="#c6c8c4"/><rect x="354" y="291" width="36.6" height="15.5" fill="#d9d9d4"/><rect x="340" y="291" width="14" height="15.5" fill="#a8acac"/><rect x="340" y="306.5" width="50.6" height="20" fill="#63c2d2"/><rect x="340" y="300" width="9" height="8" fill="#58b4c6"/><rect x="340" y="312.5" width="25" height="15" fill="#161616"/><polygon points="341.0,313 342.6,313 346.0,327 344.4,327" fill="#e8e4d8"/><polygon points="345.3,313 346.9,313 350.3,327 348.7,327" fill="#e8e4d8"/><polygon points="349.6,313 351.2,313 354.6,327 353.0,327" fill="#e8e4d8"/><polygon points="353.9,313 355.5,313 358.9,327 357.3,327" fill="#e8e4d8"/><polygon points="358.2,313 359.8,313 363.2,327 361.6,327" fill="#e8e4d8"/><polygon points="362.5,313 364.1,313 367.5,327 365.9,327" fill="#e8e4d8"/><rect x="340" y="310" width="26" height="3" fill="#4fb4c8"/><rect x="340" y="326" width="26" height="3" fill="#56b8ca"/><polygon points="366,325.5 390.6,325.5 390.6,333 350,333" fill="#9fb0b0"/><rect x="340" y="329" width="12" height="13" fill="#8a9a9e"/><rect x="352" y="333" width="38.6" height="9" fill="#d9d9d3"/></svg>
<div class="t" style="left:-0.50px;top:-0.42px;font-size:9px;color:#a0a0a0;transform:scaleX(0.8177);-webkit-text-stroke:0;">rador 011]</div>
<div class="t" style="left:10.50px;top:13.26px;font-size:9.5px;color:#eef2fa;transform:scaleX(0.8011);">Datos/H</div>
<div class="t" style="left:-0.50px;top:30.16px;font-size:9.5px;color:#5c5c5c;transform:scaleX(0.7385);-webkit-text-stroke:0;">ntrar/Reemp</div>
<div class="t" style="left:-0.50px;top:44.16px;font-size:9.5px;color:#5c5c5c;transform:scaleX(0.7745);-webkit-text-stroke:0;">a múltiple</div>
<div class="t" style="left:-0.50px;top:58.56px;font-size:9.5px;color:#5c5c5c;transform:scaleX(0.7713);-webkit-text-stroke:0;">a de ventan</div>
<div class="t" style="left:-0.50px;top:71.26px;font-size:9.5px;color:#5c5c5c;transform:scaleX(0.7854);-webkit-text-stroke:0;">dición</div>
<div class="t" style="left:0.60px;top:87.73px;font-size:8px;color:#333;transform:scaleX(0.5839);">4</div>
<div class="t" style="left:23.20px;top:87.80px;font-size:8.5px;color:#223;transform:scaleX(0.7846);">10 -</div>
<div class="t" style="left:336.00px;top:71.85px;font-size:8.8px;color:#5e5e5e;transform:scaleX(0.8207);-webkit-text-stroke:0;">Organizar</div>
<div class="t" style="left:515.80px;top:72.05px;font-size:8.8px;color:#5e5e5e;transform:scaleX(0.7849);-webkit-text-stroke:0;">Fuente</div>
<div class="t" style="left:452.00px;top:34.81px;font-size:9.2px;color:#222;transform:scaleX(0.8048);">Arial</div>
<div class="t" style="left:516.30px;top:35.12px;font-size:8.6px;color:#222;transform:scaleX(0.8052);">30</div>
<div class="t" style="left:319.60px;top:88.17px;font-size:8.3px;color:#0a0a0a;transform:scaleX(0.8537);font-weight:bold;-webkit-text-stroke:0.3px #0a0a0a;">12 - Generador 011</div>
<div class="t" style="left:560.00px;top:36.65px;font-size:14px;color:#fff;transform:scaleX(0.9886);">18</div>
<div class="t" style="left:611.50px;top:34.80px;font-size:8.5px;color:#8c8c8c;transform:scaleX(0.9129);">S0</div>
<div class="t" style="left:612.00px;top:53.60px;font-size:8.5px;color:#8c8c8c;transform:scaleX(0.8977);">L1</div>
<div class="t" style="left:315.20px;top:145.96px;font-size:18px;color:#123f4c;transform:scaleX(1.0076);-webkit-text-stroke:0.3px #123f4c;">ECTRICA MALPASO</div>
<div class="t" style="left:304.60px;top:145.96px;font-size:18px;color:#123f4c;transform:scaleX(0.9984);-webkit-text-stroke:0.3px #123f4c;">L</div>
<div class="t" style="left:492.90px;top:151.27px;font-size:65.6px;color:#0e4848;transform:scaleX(0.9092);font-weight:bold;-webkit-text-stroke:3.2px #0e4848;">G</div>
<div class="t" style="left:366.70px;top:287.34px;font-size:12px;color:#111c66;transform:scaleX(0.9685);-webkit-text-stroke:0.25px #15226e;">G1 POT REACTIVA</div>
<div class="t" style="left:307.50px;top:211.42px;font-size:12.5px;color:#111c66;transform:scaleX(0.9588);-webkit-text-stroke:0.5px #15226e;">E</div>
<div class="t" style="left:325.40px;top:211.92px;font-size:11.2px;color:#9a1b1b;transform:scaleX(1.0357);font-weight:bold;font-style:italic;-webkit-text-stroke:0.55px #9a1b1b;">#########</div>
<div class="t" style="left:478.70px;top:287.32px;font-size:11.2px;color:#9a1b1b;transform:scaleX(1.0411);font-weight:bold;font-style:italic;-webkit-text-stroke:0.55px #9a1b1b;">#########</div>
<div class="t" style="left:313.00px;top:371.92px;font-size:11.2px;color:#9a1b1b;transform:scaleX(1.0500);font-weight:bold;font-style:italic;-webkit-text-stroke:0.55px #9a1b1b;">#########</div>
<div class="a" style="left:37.00px;top:3.50px;width:274.00px;height:486.00px;background:#efefef;border-radius:5px 5px 0 0;box-shadow:0 0 0 0.8px rgba(250,250,250,.9), 0 0 4px 1px rgba(0,0,0,.42);"></div><div class="a" style="left:37.00px;top:3.50px;width:274.00px;height:19.00px;background:linear-gradient(#e4f1fb,#e9f2f9 70%,#eef1f3);border-radius:5px 5px 0 0;"></div><svg class="a" style="left:296.7px;top:9px" width="8" height="8" viewBox="0 0 8 8"><path d="M0.7 0.7 L7.1 7.1 M7.1 0.7 L0.7 7.1" stroke="#222" stroke-width="0.9" fill="none"/></svg><div class="a" style="left:41.00px;top:25.50px;width:208.00px;height:13.00px;background:#f6f6f6;"></div><div class="a" style="left:41.00px;top:25.00px;width:28.00px;height:13.50px;background:#fbfbfb;"></div><div class="a" style="left:41.00px;top:38.00px;width:264.70px;height:426.00px;background:#f8f8f8;"></div><div class="a" style="left:106.00px;top:44.20px;width:189.50px;height:11.30px;background:#fff;border-bottom:1px solid #8c8c8c;box-sizing:border-box;border-radius:1px;"></div><div class="a" style="left:45.00px;top:62.30px;width:257.50px;height:19.00px;background:#f9f9f9;border:1px solid #ebebeb;box-sizing:border-box;border-radius:1px;"></div><div class="a" style="left:58.00px;top:68.80px;width:8.00px;height:8.00px;background:#fdfdfd;border:0.9px solid #858585;box-sizing:border-box;border-radius:1.5px;"></div><div class="a" style="left:285.50px;top:66.70px;width:13.50px;height:11.80px;background:#fff;border-radius:1px;box-shadow:0 0 1.5px #fff;"></div><div class="a" style="left:285.50px;top:120.50px;width:13.50px;height:12.50px;background:#fff;border-radius:1px;box-shadow:0 0 1.5px #fff;"></div><div class="a" style="left:45.40px;top:213.50px;width:257.40px;height:36.80px;background:transparent;border:1px solid #e8e8e8;box-sizing:border-box;border-radius:1px;"></div><div class="a" style="left:47.50px;top:208.00px;width:43.00px;height:10.00px;background:#f8f8f8;"></div><div class="a" style="left:90.60px;top:220.40px;width:157.60px;height:11.00px;background:#fff;border:1px solid #e0e0e0;border-bottom-color:#c4c4c4;box-sizing:border-box;border-radius:1.5px;"></div><svg class="a" style="left:240.5px;top:223.5px" width="7" height="5" viewBox="0 0 7 5"><path d="M0.6 0.8 L3.5 3.8 L6.4 0.8" stroke="#555" stroke-width="0.9" fill="none"/></svg><div class="a" style="left:251.30px;top:220.80px;width:29.30px;height:10.60px;background:#fdfdfd;border:1px solid #dcdcdc;border-bottom-color:#c8c8c8;box-sizing:border-box;border-radius:1.5px;"></div><div class="a" style="left:282.50px;top:220.80px;width:12.60px;height:10.60px;background:#fdfdfd;border:1px solid #dcdcdc;border-bottom-color:#c8c8c8;box-sizing:border-box;border-radius:1.5px;"></div><svg class="a" style="left:0;top:0" width="626" height="487" viewBox="32 0 626 487"><path d="M295 224 h5 a2 2 0 0 1 2 2 v1.4 a2 2 0 0 1 -2 2 h-2.2 l-1.8 1.2 v-1.2 h-1 a2 2 0 0 1 -2 -2 v-1.4 a2 2 0 0 1 2 -2z" fill="#fff" stroke="#8c8c8c" stroke-width="0.7"/><circle cx="299.8" cy="228" r="1.9" fill="#e99a2e"/><path d="M318.2 228.6 a2 2 0 0 1 0.3 -4 a2.6 2.6 0 0 1 4.8 -0.2 a2 2 0 0 1 0.6 3.6" fill="#fff" stroke="#8c8c8c" stroke-width="0.7"/><path d="M323.4 225.2 v3.6 M321.6 227.4 l1.8 1.8 l1.8 -1.8" stroke="#2e9a5a" stroke-width="1.1" fill="none"/></svg><div class="a" style="left:90.60px;top:234.40px;width:76.60px;height:11.00px;background:#fff;border:1px solid #e0e0e0;border-bottom-color:#c4c4c4;box-sizing:border-box;border-radius:1.5px;"></div><svg class="a" style="left:160.4px;top:238.6px" width="5" height="3" viewBox="0 0 5 3"><polygon points="0.3,0.2 4.7,0.2 2.5,2.8" fill="#111"/></svg><div class="a" style="left:223.00px;top:233.80px;width:25.20px;height:12.00px;background:#f6f6f6;border-top:1px solid #b4b4b4;border-left:1px solid #a0a0a0;box-sizing:border-box;"></div><div class="a" style="left:169.00px;top:234.40px;width:54.00px;height:11.30px;background:#fff;border:1px solid #e8e8e8;border-right-color:#b0b0b0;border-bottom-color:#a4a4a4;box-sizing:border-box;box-shadow:0.5px 0.7px 1px rgba(0,0,0,.22);"></div><div class="a" style="left:125.20px;top:470.00px;width:42.50px;height:12.80px;background:#fdfdfd;border:1.1px solid #3f86cc;box-sizing:border-box;border-radius:2.2px;"></div><div class="a" style="left:172.80px;top:470.00px;width:40.90px;height:12.80px;background:#fdfdfd;border:1px solid #e6e6e6;border-bottom-color:#d2d2d2;box-sizing:border-box;border-radius:2.2px;"></div><div class="a" style="left:219.40px;top:470.00px;width:40.60px;height:12.80px;background:#fdfdfd;border:1px solid #e6e6e6;border-bottom-color:#d2d2d2;box-sizing:border-box;border-radius:2.2px;"></div><div class="a" style="left:265.50px;top:470.00px;width:40.90px;height:12.80px;background:#fdfdfd;border:1px solid #e6e6e6;border-bottom-color:#d2d2d2;box-sizing:border-box;border-radius:2.2px;"></div>
<div class="t" style="left:41.80px;top:8.71px;font-size:9.2px;color:#1c1c1c;transform:scaleX(0.7920);">NuméricoPropiedades</div>
<div class="t" style="left:44.20px;top:27.57px;font-size:7.6px;color:#1a1a1a;transform:scaleX(0.8065);">General</div>
<div class="t" style="left:72.00px;top:27.77px;font-size:7.6px;color:#1a1a1a;transform:scaleX(0.8373);">Formato numérico</div>
<div class="t" style="left:129.90px;top:27.77px;font-size:7.6px;color:#1a1a1a;transform:scaleX(0.8087);">Seguridad</div>
<div class="t" style="left:164.00px;top:27.77px;font-size:7.6px;color:#1a1a1a;transform:scaleX(0.8199);">Forma</div>
<div class="t" style="left:188.60px;top:27.77px;font-size:7.6px;color:#1a1a1a;transform:scaleX(0.8441);">Tipo de letra</div>
<div class="t" style="left:230.00px;top:27.77px;font-size:7.6px;color:#1a1a1a;transform:scaleX(0.8549);">Perfil</div>
<div class="t" style="left:65.00px;top:45.87px;font-size:7.6px;color:#1a1a1a;transform:scaleX(0.7974);">Descripción :</div>
<div class="t" style="left:108.40px;top:45.91px;font-size:7.2px;color:#1a1a1a;transform:scaleX(0.7891);">G1 POT REAL</div>
<div class="t" style="left:67.90px;top:68.97px;font-size:7.6px;color:#1a1a1a;transform:scaleX(0.8347);">Permitir entrada</div>
<div class="t" style="left:49.00px;top:209.87px;font-size:7.6px;color:#1a1a1a;transform:scaleX(0.8301);">Leer dirección</div>
<div class="t" style="left:53.00px;top:221.87px;font-size:7.6px;color:#1a1a1a;transform:scaleX(0.8403);">Dispositivo :</div>
<div class="t" style="left:92.80px;top:222.94px;font-size:7.4px;color:#1a1a1a;transform:scaleX(0.7873);">MAESTRO MODBUS TCP/IP</div>
<div class="t" style="left:57.00px;top:236.77px;font-size:7.6px;color:#1a1a1a;transform:scaleX(0.8474);">Dirección :</div>
<div class="t" style="left:93.00px;top:236.74px;font-size:7.4px;color:#1a1a1a;transform:scaleX(0.7936);">3x</div>
<div class="t" style="left:172.00px;top:236.74px;font-size:7.4px;color:#1a1a1a;transform:scaleX(0.7651);">61</div>
<div class="t" style="left:135.70px;top:472.77px;font-size:7.6px;color:#1a1a1a;transform:scaleX(0.8139);">Aceptar</div>
<div class="t" style="left:181.00px;top:472.77px;font-size:7.6px;color:#1a1a1a;transform:scaleX(0.8029);">Cancelar</div>
<div class="t" style="left:229.60px;top:472.77px;font-size:7.6px;color:#1a1a1a;transform:scaleX(0.8226);">Aplicar</div>
<div class="t" style="left:277.40px;top:472.77px;font-size:7.6px;color:#1a1a1a;transform:scaleX(0.7988);">Ayuda</div>
<div class="t" style="left:69.40px;top:360.88px;font-size:12.9px;color:#0a0a0a;transform:scaleX(1.0874);-webkit-text-stroke:0.3px #0a0a0a;">And this picture show the config of</div>
<div class="t" style="left:69.40px;top:378.28px;font-size:12.9px;color:#0a0a0a;transform:scaleX(1.0657);-webkit-text-stroke:0.3px #0a0a0a;">32 bit registers</div>
</div>
</body>
</html>
